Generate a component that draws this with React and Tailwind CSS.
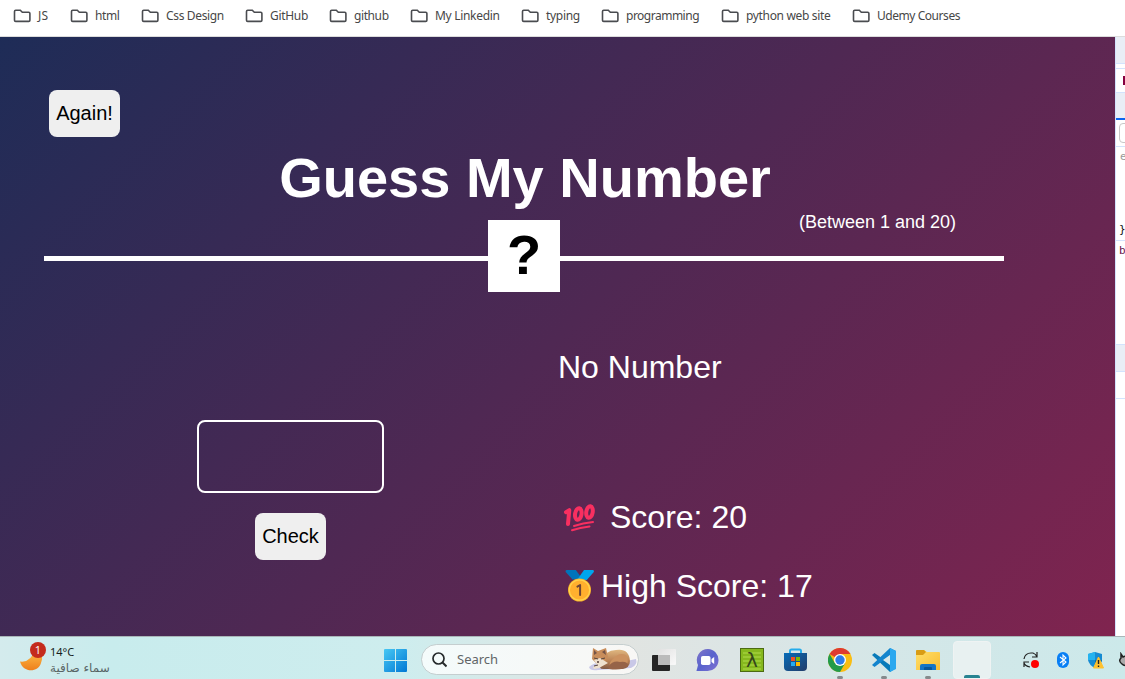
import React from "react";

const bookmarks = [
  ["JS", "w-[57px]", "tracking-[0.2px]"],
  ["html", "w-[71px]", "tracking-[-0.4px]"],
  ["Css Design", "w-[104px]", "tracking-[-0.35px]"],
  ["GitHub", "w-[84px]", "tracking-[-0.3px]"],
  ["github", "w-[81px]", "tracking-[-0.4px]"],
  ["My Linkedin", "w-[111px]", "tracking-[-0.3px]"],
  ["typing", "w-[80px]", "tracking-[-0.3px]"],
  ["programming", "w-[120px]", "tracking-[-0.5px]"],
  ["python web site", "w-[131px]", "tracking-[-0.33px]"],
  ["Udemy Courses", "w-[120px]", "tracking-[-0.45px]"],
];

function Folder() {
  return (
    <svg width="18" height="14" viewBox="0 0 18 14" className="shrink-0">
      <path d="M2.700 1.200h4.600l2 2h6.400q1.200 0 1.200 1.200v6.800q0 1.200-1.200 1.200H2.700Q1.500 12.400 1.500 11.200V2.400Q1.500 1.200 2.700 1.200Z" fill="none" stroke="#4a4c50" strokeWidth="1.600" />
    </svg>
  );
}

function Bookmarks() {
  return (
    <nav className="flex h-[37px] border-b border-[#dcdcdc] bg-white pl-[13px] text-[12px] text-[#474747]">
      {bookmarks.map(([name, width, tracking]) => (
        <div key={name} className={`flex h-8 shrink-0 items-center gap-[7px] whitespace-nowrap ${width} ${tracking}`}>
          <Folder />
          <span>{name}</span>
        </div>
      ))}
    </nav>
  );
}

function Hundred() {
  return (
    <svg width="34" height="32" viewBox="0 0 34 32" className="shrink-0">
      <g fill="none" stroke="#f92f60" strokeLinecap="round" strokeLinejoin="round">
        <path d="M3 11.200 6.300 9.200 5 23" strokeWidth="4" />
        <ellipse cx="15.300" cy="13" rx="3.200" ry="5.800" transform="rotate(10 15.300 13)" strokeWidth="4" />
        <ellipse cx="26.500" cy="11" rx="3.200" ry="5.800" transform="rotate(10 26.500 11)" strokeWidth="4" />
        <path d="M11 25Q20 22 30 21M9 29.300Q17 26.800 26.500 25.500" strokeWidth="2" />
      </g>
    </svg>
  );
}

function Medal() {
  return (
    <svg width="30" height="33" viewBox="0 0 30 33" className="shrink-0">
      <path d="M1.500 0h9.300l7 9.500H7.500L.7 2Q0 .5 1.500 0Z" fill="#0074ba" />
      <path d="M19 0h9q1.500.4.800 2l-7 8H12Z" fill="#00a6ed" />
      <circle cx="14.500" cy="20" r="11.500" fill="#f3ad29" />
      <circle cx="14.500" cy="20" r="10.200" fill="#ffb02e" stroke="#ffd34d" strokeWidth="1.200" />
      <path d="m12.400 16.600 2.700-1.600v10" fill="none" stroke="#6d4534" strokeWidth="2" strokeLinecap="round" strokeLinejoin="round" />
    </svg>
  );
}

function Game() {
  return (
    <main className="h-[599px] w-[1115px] shrink-0 bg-[linear-gradient(135deg,#1e2c57_0%,#80244f_100%)] pt-[53px] font-['Liberation_Sans',Arial,sans-serif] text-white">
      <button className="ml-[49px] block h-[47px] w-[71px] rounded-lg bg-[#efefef] pb-[2px] text-[20px] leading-6 text-black">Again!</button>
      <h1 className="ml-[45px] mt-[9px] w-[960px] text-center text-[56px] font-bold leading-[64px]">Guess My Number</h1>
      <p className="ml-[799px] mt-[2px] text-[18px] leading-5">(Between 1 and 20)</p>
      <div className="-mt-3 ml-[44px] flex h-[72px] w-[960px] items-center">
        <div className="mt-[5px] h-[5px] flex-1 bg-white" />
        <div className="h-[72px] w-[72px] bg-white text-center text-[56px] font-bold leading-[70px] text-black">?</div>
        <div className="mt-[5px] h-[5px] flex-1 bg-white" />
      </div>
      <section className="flex pl-[197px]">
        <div className="flex w-[187px] flex-col items-center pt-[128px]">
          <input className="h-[73px] w-[187px] rounded-lg border-2 border-white bg-transparent text-center outline-none" aria-label="Guess" />
          <button className="mt-5 h-[47px] w-[71px] rounded-lg bg-[#efefef] pb-[2px] text-[20px] leading-6 text-black">Check</button>
        </div>
        <div className="ml-[174px] pt-[57px] text-[32px] leading-9">
          <p>No Number</p>
          <div className="mt-[114px] flex h-9 items-center pl-[5px]">
            <Hundred />
            <span className="ml-[13px] whitespace-nowrap">Score: 20</span>
          </div>
          <div className="mt-[33px] flex h-9 items-center pl-[7px]">
            <Medal />
            <span className="ml-[6px] whitespace-nowrap">High Score: 17</span>
          </div>
        </div>
      </section>
    </main>
  );
}

function Inspector() {
  return (
    <aside className="h-[599px] w-[10px] overflow-hidden border-l border-[#d3e3fd] bg-white font-['DejaVu_Sans_Mono',monospace] text-[11px]">
      <div className="h-[27px] border-b border-[#d3e3fd] bg-[#e9eef6]" />
      <div className="h-[5px] border-b border-[#d3e3fd]" />
      <div className="h-[24px] border-b border-[#d3e3fd] pl-[7px] pt-[7px]">
        <div className="h-[9px] w-2 bg-[#85003f]" />
      </div>
      <div className="h-[27px] border-b-2 border-[#0b65f0] bg-[#e9eef6]" />
      <div className="h-[27px] border-b border-[#d3e3fd] pl-[3px] pt-[3px]">
        <div className="h-5 w-10 rounded-[4px] border border-[#c7c7c7]" />
      </div>
      <div className="flex h-[94px] flex-col justify-between border-b border-[#d3e3fd] pb-1 pl-[4px] pt-[3px] leading-[13px]">
        <span className="text-[#999]">e</span>
        <span className="-ml-px text-[#111]">{"}"}</span>
      </div>
      <div className="h-[104px] border-b border-[#d3e3fd] pl-[3px] pt-[3px] leading-[13px] text-[#65124b]">b</div>
      <div className="h-[27px] border-b border-[#d3e3fd] bg-[#e9eef6]" />
      <div className="h-[27px] border-b border-[#d3e3fd]" />
    </aside>
  );
}

function Weather() {
  return (
    <div className="flex w-[384px] shrink-0 pl-[20px]">
      <svg width="28" height="32" viewBox="0 0 28 32" className="mt-[4px] shrink-0">
        <defs><linearGradient id="moon" x2="0" y2="1"><stop stopColor="#ffc44c" /><stop offset="1" stopColor="#ee7f1c" /></linearGradient></defs>
        <path d="M0 20.500Q11 22 15 8Q25 14 21 22C18 32 3 32 0 20.500Z" fill="url(#moon)" />
        <circle cx="18" cy="9" r="8" fill="#c42b1c" />
        <text x="18" y="13" textAnchor="middle" fontSize="11" fill="white" fontFamily="Open Sans">1</text>
      </svg>
      <div className="ml-[2px] pt-[7px] text-[11px] leading-4">
        <div className="text-[#161c1c]">14°C</div>
        <div dir="rtl" className="whitespace-nowrap font-['DejaVu_Sans',sans-serif] text-[12px] text-[#586565]">سماء صافية</div>
      </div>
    </div>
  );
}

function Fox() {
  return (
    <svg width="50" height="26" viewBox="0 0 50 26">
      <defs><linearGradient id="fur" x2="0" y2="1"><stop stopColor="#dfb780" /><stop offset=".55" stopColor="#bd8456" /><stop offset="1" stopColor="#805844" /></linearGradient></defs>
      <path d="M1 20Q9 13 24 17L48 12Q50 18 43 21L10 23Q2 24 1 20Z" fill="#c9c8e7" />
      <path d="M13 15Q17 3 28 3Q41 1 42 14Q42 21 34 22L17 22Q9 23 13 15Z" fill="url(#fur)" />
      <path d="M25 12Q31 5 38 8Q43 17 34 21L22 21Q20 16 25 12Z" fill="#cc9260" />
      <path d="M20 20Q25 13 32 15Q40 14 40 19Q34 24 21 22Z" fill="#966348" />
      <path d="M5 1 10 4 18 1 20 10 16 15 9 17 4 12Z" fill="#c88d5b" />
      <path d="m6 3 3 3-3 2ZM17 3l1 5-4-3Z" fill="#745346" />
      <path d="m6 13 6-2 8 5-9 5-5 1-1-2 4-2Z" fill="#eee0ce" />
      <path d="m6 11 4 1M13 12l4-1M6 19l4-1" stroke="#54443e" fill="none" />
      <circle cx="10" cy="15" r="1" fill="#503a35" />
    </svg>
  );
}

function Chrome() {
  return (
    <svg width="24" height="24" viewBox="0 0 24 24">
      <circle cx="12" cy="12" r="12" fill="#f9bd13" />
      <path d="M12 12 1.600 6A12 12 0 0 1 22.400 6H12Z" fill="#df3b31" />
      <path d="M1.600 6A12 12 0 0 0 12 24l5.200-9L12 12 6.800 15Z" fill="#239b4b" />
      <circle cx="12" cy="12" r="6" fill="white" />
      <circle cx="12" cy="12" r="4.700" fill="#2f7de9" />
    </svg>
  );
}

function AppIcons() {
  return (
    <div className="ml-[13px] flex h-[42px] shrink-0 items-start pt-[11px]">
      <svg width="44" height="26" viewBox="0 0 44 26" className="shrink-0">
        <defs><linearGradient id="pane" x2="1" y2="1"><stop stopColor="#e1e1e1" /><stop offset="1" stopColor="#fafafa" /></linearGradient></defs>
        <rect y="7" width="18" height="16" rx="1" fill="#252525" />
        <rect x="6" y="1" width="18" height="16" rx="1" fill="url(#pane)" />
        <path d="M6 7h12v10H7q-1 0-1-1Z" fill="#bbb" />
      </svg>
      <svg width="44" height="26" viewBox="0 0 44 26" className="shrink-0">
        <defs><linearGradient id="chat" x2="1" y2="1"><stop stopColor="#8276c8" /><stop offset=".5" stopColor="#5963cd" /><stop offset="1" stopColor="#8172d1" /></linearGradient></defs>
        <path d="M12 1a11 11 0 1 1-1 22H1q-1 0 0-2l1-4A11 11 0 0 1 12 1Z" fill="url(#chat)" />
        <rect x="5" y="8" width="9.500" height="9" rx="1.800" fill="white" />
        <path d="m15.500 11 2.700-2v7l-2.700-2Z" fill="white" />
      </svg>
      <svg width="44" height="26" viewBox="0 0 44 26" className="shrink-0">
        <rect x=".5" y=".5" width="23" height="23" fill="#86b81e" stroke="#4c6b12" />
        <path d="M3 5h18M3 9h18M3 13h18M3 17h18M3 21h18" stroke="#a3cf3d" strokeWidth="1.300" />
        <text x="12" y="19" textAnchor="middle" fontSize="20" fontFamily="DejaVu Sans" fill="#35461b">λ</text>
      </svg>
      <svg width="44" height="26" viewBox="0 0 44 26" className="shrink-0">
        <defs><linearGradient id="bag" x2="1" y2="1"><stop stopColor="#076bb7" /><stop offset="1" stopColor="#223c69" /></linearGradient></defs>
        <path d="M6 6V3q0-1.500 1.500-1.500h8Q17 1.500 17 3v3" fill="none" stroke="#25aceb" strokeWidth="2" />
        <path d="M0 5h23v14q0 4-4 4H4q-4 0-4-4Z" fill="url(#bag)" />
        <path d="M7 9h4v4H7Z" fill="#f25022" /><path d="M12 9h4v4h-4Z" fill="#7fba00" /><path d="M7 14h4v4H7Z" fill="#22aaf2" /><path d="M12 14h4v4h-4Z" fill="#ffb900" />
      </svg>
      <div className="flex w-[44px] shrink-0 flex-col"><Chrome /><span className="ml-[9px] mt-[4px] h-[3px] w-[6px] rounded-full bg-[#858b8d]" /></div>
      <div className="flex w-[44px] shrink-0 flex-col">
        <svg width="24" height="24" viewBox="0 0 24 24">
          <path d="M0 7 2.500 5 24 20l-6 4Z" fill="#087ab9" />
          <path d="M0 17 18 0l6 3-21.500 16Z" fill="#1384cd" />
          <path d="m18 0 6 3v18l-6 3Z" fill="#2ba8ef" />
          <path d="m18 7-7 5 7 5Z" fill="#d9e8e9" />
        </svg>
        <span className="ml-[9px] mt-[4px] h-[3px] w-[6px] rounded-full bg-[#858b8d]" />
      </div>
      <div className="flex w-[37px] shrink-0 flex-col">
        <svg width="24" height="24" viewBox="0 0 24 24">
          <defs><linearGradient id="folder" x2="1" y2="1"><stop stopColor="#ffe06b" /><stop offset="1" stopColor="#f9bd32" /></linearGradient></defs>
          <path d="M0 3q0-1 1-1h7l3 2h12q1 0 1 1v17H0Z" fill="url(#folder)" />
          <path d="M0 3q0-1 1-1h7l2 2-3 3H0Z" fill="#d99c14" />
          <path d="M4 22v-4q0-2 2-2h12q2 0 2 2v4Z" fill="#1575c6" />
          <path d="M8 22v-2q0-1 1-1h6q1 0 1 1v2Z" fill="#07569b" />
        </svg>
        <span className="ml-[9px] mt-[4px] h-[3px] w-[6px] rounded-full bg-[#858b8d]" />
      </div>
      <div className="-mt-[7px] flex h-[38px] w-[38px] shrink-0 items-end justify-center rounded-[4px] border border-[#eff3f3] bg-[#e8f1f1]">
        <span className="h-[3px] w-4 rounded-t-[2px] bg-[#278391]" />
      </div>
    </div>
  );
}

function Tray() {
  return (
    <div className="ml-[31px] flex h-[42px] shrink-0 items-center pt-[4px]">
      <svg width="35" height="18" viewBox="0 0 35 18" className="shrink-0">
        <path d="M2 8Q3 2 9 2h2q3 1 4 4M15 1v5h-5M2 12q1 3 6 4M2 16v-5h5" fill="none" stroke="#222" strokeWidth="1.200" />
        <circle cx="13" cy="13" r="4" fill="#f00" />
      </svg>
      <svg width="31" height="18" viewBox="0 0 31 18" className="shrink-0">
        <rect y="1" width="12" height="16" rx="6" fill="#087ff5" />
        <path d="m3 6 6 5-3 3V4l3 3-6 5" fill="none" stroke="white" strokeWidth="1.100" />
      </svg>
      <svg width="30" height="18" viewBox="0 0 30 18" className="shrink-0">
        <path d="M7 1 14 3v6Q13 14 7 17 1 14 0 9V3Z" fill="#168bd2" />
        <path d="M7 1v8H0V3Z" fill="#24b3ef" /><path d="M7 9h7q-1 5-7 8Z" fill="#086dac" />
        <path d="m10.500 6 5 11h-10Z" fill="#ffc12e" stroke="#ffc12e" />
        <path d="M10.500 9v4M10.500 14.500v1.500" stroke="#222" strokeWidth="1.400" />
      </svg>
      <svg width="14" height="16" viewBox="0 0 14 16" className="shrink-0">
        <path d="m3 2 2 3q4-2 7 0v7q-5 3-8 0Q0 9 3 6Z" fill="#aaa" stroke="#222" strokeWidth="1.500" />
      </svg>
    </div>
  );
}

function Taskbar() {
  return (
    <footer className="flex h-[43px] overflow-hidden border-t border-[#a9b6b8] bg-[linear-gradient(90deg,#d4ebed_0%,#c8eced_10%,#ceedee_36%,#e2e4e1_54%,#dce5e5_65%,#d3e7e8_82%,#cce9ea_100%)]">
      <Weather />
      <svg width="23" height="23" viewBox="0 0 23 23" className="mt-[12px] shrink-0">
        <defs><linearGradient id="windows" x2="1" y2="1"><stop stopColor="#48c8f4" /><stop offset="1" stopColor="#0078d4" /></linearGradient></defs>
        <path d="M0 1q0-1 1-1h10v11H0ZM12 0h10q1 0 1 1v10H12ZM0 12h11v11H1q-1 0-1-1ZM12 12h11v10q0 1-1 1H12Z" fill="url(#windows)" />
      </svg>
      <div className="ml-[14px] mt-[7px] flex h-[31px] w-[218px] shrink-0 items-center rounded-full border border-[#c5cecf] bg-[linear-gradient(90deg,#f4fbfb,#f8f7f5)] pl-[10px]">
        <svg width="15" height="16" viewBox="0 0 15 16" className="shrink-0">
          <circle cx="6.500" cy="6.500" r="5.500" fill="none" stroke="#262a2c" strokeWidth="1.700" />
          <path d="m10.500 10.500 4 4" stroke="#262a2c" strokeWidth="2" />
        </svg>
        <span className="ml-[10px] w-[131px] text-[13px] text-[#616567]">Search</span>
        <Fox />
      </div>
      <AppIcons />
      <Tray />
    </footer>
  );
}

export default function App() {
  return (
    <div className="h-[679px] w-[1125px] overflow-hidden bg-white font-['Noto_Sans','Open_Sans',sans-serif]">
      <Bookmarks />
      <div className="flex h-[599px]">
        <Game />
        <Inspector />
      </div>
      <Taskbar />
    </div>
  );
}
